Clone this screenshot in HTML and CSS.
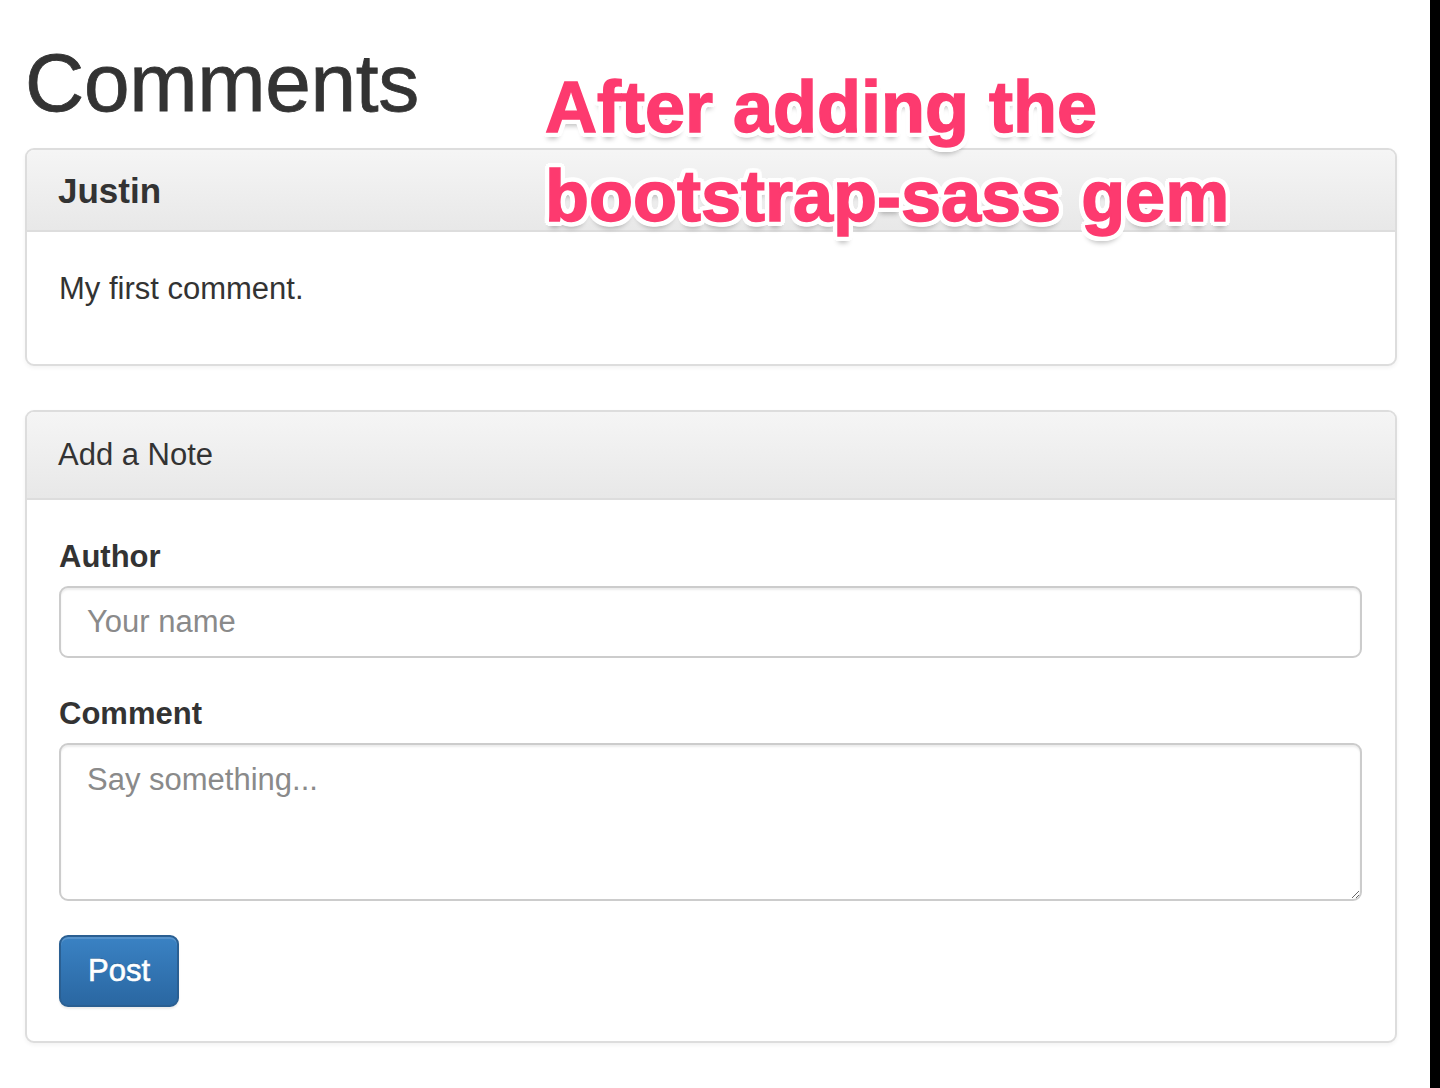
FILE: index.html
```html
<!DOCTYPE html>
<html lang="en">
<head>
<meta charset="utf-8">
<title>Comments</title>
<link rel="stylesheet" href="styles.css">
</head>
<body>
<div class="screen">
  <main class="page">
    <div class="container">
      <h1 class="page-title">Comments</h1>
      <div class="panel">
        <div class="panel-heading"><h3 class="panel-title">Justin</h3></div>
        <div class="panel-body"><p class="comment-text">My first comment.</p></div>
      </div>
      <div class="panel panel-form">
        <div class="panel-heading panel-heading-plain">Add a Note</div>
        <div class="panel-body panel-body-form">
          <form class="note-form">
            <div class="form-group">
              <label class="form-label" for="author">Author</label>
              <input class="form-control" id="author" type="text" placeholder="Your name">
            </div>
            <div class="form-group">
              <label class="form-label" for="comment">Comment</label>
              <textarea class="form-control form-textarea" id="comment" placeholder="Say something..."></textarea>
            </div>
            <button class="btn-primary" type="button">Post</button>
          </form>
        </div>
      </div>
    </div>
    <div class="annotation">After adding the<br>bootstrap-sass gem</div>
  </main>
  <div class="edge"></div>
</div>
</body>
</html>
```

FILE: styles.css
```css
* { box-sizing: border-box; }
html, body { margin: 0; padding: 0; background: #fff; }
body {
  font-family: "Liberation Sans", Arial, Helvetica, sans-serif;
  color: #333;
  font-size: 31px;
  line-height: 44px;
}
.screen {
  display: flex;
  width: 1440px;
  min-height: 1088px;
}
.page {
  position: relative;
  width: 1430px;
  flex: 0 0 1430px;
}
.edge {
  flex: 0 0 10px;
  background: #000;
}
.container {
  width: 1372px;
  margin-left: 25px;
}
.page-title {
  margin: 38px 0 20px;
  font-size: 82px;
  line-height: 90px;
  font-weight: normal;
  color: #333;
  letter-spacing: -0.3px;
  -webkit-text-stroke: 0.8px #333;
}
.panel {
  border: 2px solid #ddd;
  border-radius: 9px;
  background: #fff;
  box-shadow: 0 2px 4px rgba(0,0,0,0.05);
  margin-bottom: 44px;
}
.panel-heading {
  background: linear-gradient(to bottom, #f5f5f5 0%, #e8e8e8 100%);
  border-bottom: 2px solid #ddd;
  border-radius: 7px 7px 0 0;
  padding: 21px 31px 20px;
  color: #333;
}
.panel-heading-plain {
  padding: 21px 31px 21px;
}
.panel-title {
  margin: 0;
  font-size: 35px;
  line-height: 39px;
  font-weight: bold;
  color: #333;
}
.panel-body {
  padding: 35px 32px 33px;
}
.panel-body-form {
  padding-bottom: 34px;
}
.comment-text {
  margin: 0 0 20px;
}
.form-group {
  margin-bottom: 34px;
}
.form-label {
  display: block;
  font-weight: bold;
  margin-bottom: 7px;
}
.form-control {
  display: block;
  width: 1303px;
  height: 72px;
  padding: 11px 26px;
  font-family: inherit;
  font-size: 31px;
  line-height: 44px;
  color: #555;
  background: #fff;
  border: 2px solid #ccc;
  border-radius: 9px;
  box-shadow: inset 0 2px 2px rgba(0,0,0,0.075);
  margin: 0;
}
.form-control::placeholder { color: #8a8a8a; }
.form-textarea {
  height: 158px;
  padding-top: 13px;
  resize: vertical;
}
.btn-primary {
  display: inline-block;
  font-family: inherit;
  font-size: 31px;
  line-height: 44px;
  color: #fff;
  padding: 12px 27px 12px;
  border: 2px solid #2a5f92;
  border-radius: 9px;
  background: linear-gradient(to bottom, #3a82c4 0%, #2a67a2 100%);
  text-shadow: 0 -1px 0 rgba(0,0,0,0.2);
  -webkit-text-stroke: 0.6px #fff;
  box-shadow: inset 0 2px 0 rgba(255,255,255,0.15), 0 2px 2px rgba(0,0,0,0.075);
  cursor: pointer;
}
.annotation {
  position: absolute;
  left: 545px;
  top: 63px;
  font-size: 72px;
  line-height: 89px;
  font-weight: bold;
  color: #fd3a6f;
  white-space: nowrap;
  -webkit-text-stroke: 1.5px #fd3a6f;
  text-shadow:
    5px 0 0 #fff, -5px 0 0 #fff, 0 5px 0 #fff, 0 -5px 0 #fff,
    4px 4px 0 #fff, -4px 4px 0 #fff, 4px -4px 0 #fff, -4px -4px 0 #fff,
    2px 5px 0 #fff, -2px 5px 0 #fff, 5px 2px 0 #fff, -5px 2px 0 #fff,
    2px -5px 0 #fff, -2px -5px 0 #fff, 5px -2px 0 #fff, -5px -2px 0 #fff,
    0 7px 5px rgba(0,0,0,0.25);
}
```
